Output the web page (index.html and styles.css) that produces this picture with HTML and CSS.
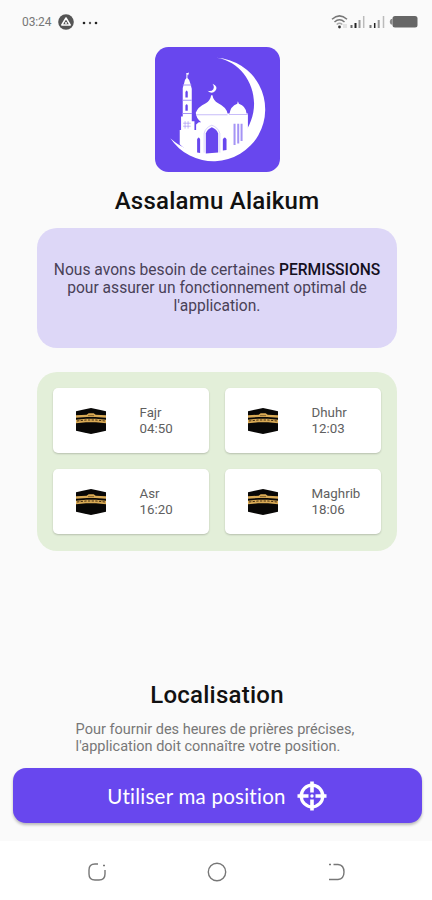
FILE: index.html
```html
<!DOCTYPE html>
<html lang="fr">
<head>
<meta charset="utf-8">
<meta name="viewport" content="width=device-width">
<title>Assalamu Alaikum</title>
<link rel="stylesheet" href="styles.css">
</head>
<body>
<svg class="defs" width="0" height="0" aria-hidden="true">
  <symbol id="kaaba" viewBox="0 0 90 78">
    <path d="M0 10 20 5 45 0 70 5 90 10V68L70 73 45 78 20 73 0 68Z" fill="#080706"/>
    <path d="M0 22 32 20 38 16H53L59 20 90 22V29L58 27H33L0 29Z" fill="#d9aa55"/>
    <path d="M0 35 30 32H60L90 35V46L60 43H30L0 46Z" fill="#d9aa55"/>
    <path d="M3 39 30 36H60L87 39" fill="none" stroke="#4b3212" stroke-width="3" stroke-dasharray="7 4"/>
    <path d="M36 23H54" stroke="#80602c" stroke-width="3"/>
  </symbol>
</svg>
<div class="screen">
  <header class="status">
    <span class="clock">03:24</span>
    <svg class="app-dot" viewBox="0 0 16 16"><circle cx="8" cy="8" r="7.800" fill="#555"/><path d="M8 4 12.200 11H3.800Z" fill="none" stroke="#fff" stroke-width="1.500" stroke-linejoin="round"/><circle cx="8" cy="9" r="1" fill="#fff"/></svg>
    <svg class="more" viewBox="0 0 16 4"><circle cx="2" cy="2" r="1.300" fill="#222"/><circle cx="8" cy="2" r="1.200" fill="#555"/><circle cx="14" cy="2" r="1.300" fill="#222"/></svg>
    <svg class="signals" viewBox="0 0 87 16">
      <g fill="none" stroke="#777" stroke-width="1.500"><path d="M1 5.200Q8.500-1.500 16 5.200"/><path d="M3.500 8Q8.500 3.500 13.500 8"/><path d="M5.700 10.500Q8.500 8 11.300 10.500" stroke="#aaa"/></g>
      <circle cx="8.500" cy="13" r="1.400" fill="#333"/><path d="M13 10v4M15 10v4" stroke="#ccc"/>
      <path d="M20.500 11v3" stroke="#666" stroke-width="2"/><path d="M24.500 9v5" stroke="#222" stroke-width="2"/><path d="M28.500 6v8" stroke="#999" stroke-width="2"/><path d="M32.700 2v12" stroke="#bbb" stroke-width="1.500"/>
      <path d="M39.500 11v3" stroke="#777" stroke-width="2"/><path d="M43.700 9v5" stroke="#222" stroke-width="1.500"/><path d="M47.700 6v8" stroke="#999" stroke-width="2"/><path d="M52.500 2v12" stroke="#bbb" stroke-width="1.500"/>
      <rect x="61.500" y="2" width="25" height="11.500" rx="2.500" fill="#666"/><path d="M61.500 5H60Q57.500 7.800 60 10.500H61.500Z" fill="#888"/>
    </svg>
  </header>
  <main>
    <svg class="logo" viewBox="14 14 374 374">
      <rect x="14" y="14" width="374" height="374" rx="40" fill="#6847ee"/>
      <g fill="#fff">
        <path d="M198 46A155 155 0 1 1 60 287C75 300 100 322 150 329C230 340 293 285 308 210C322 135 275 58 198 46Z"/>
        <path d="M88 262H92V222H97V137L101 123Q102 112 108 107V92H111V107Q119 113 120 124L124 139V236H132V262H137V246L145 239H152Q137 228 136 211Q142 193 166 182Q180 173 182 158H186Q188 173 203 182Q228 194 231 213H237Q240 192 260 184L262 176 265 184Q286 191 288 213H292V270L280 305Q240 346 188 346Q127 344 88 305Z"/>
        <path d="M186 124Q205 132 194 146Q184 156 171 145Q183 148 188 141Q193 133 186 124Z"/>
        <path d="M108 93 116 90 113 99Z"/>
      </g>
      <g fill="#6847ee">
        <path d="M105 149Q109 140 112 149V165H105ZM105 189Q109 181 112 189V205H105Z"/>
        <path d="M166 333V273Q170 260 184 254Q199 260 203 273V330Z"/>
        <path d="M140 330V290Q145 279 149 290V331ZM217 324V290Q223 279 228 290V322Z"/>
      </g>
      <path d="M97 173H124M96 213H125M97 128H123" stroke="#a594f5" stroke-width="3"/>
      <path d="M98 242H121M98 251H121M104 236V258M113 236V258" stroke="#a594f5" stroke-width="2"/>
      <path d="M137 217H231M235 216H292" stroke="#c8bdf9" stroke-width="3"/>
      <path d="M252 244V307M263 244V303M273 244V295" stroke="#a594f5" stroke-width="6"/>
      <path d="M161 330V272Q166 254 184 248Q202 254 208 272V330" fill="none" stroke="#c8bdf9" stroke-width="2"/>
    </svg>
    <h1>Assalamu Alaikum</h1>
    <section class="notice">
      <p>Nous avons besoin de certaines <b>PERMISSIONS</b><br>pour assurer un fonctionnement optimal de<br>l'application.</p>
    </section>
    <section class="prayers">
      <article class="card"><svg class="kaaba"><use href="#kaaba"/></svg><p>Fajr<br>04:50</p></article>
      <article class="card"><svg class="kaaba"><use href="#kaaba"/></svg><p>Dhuhr<br>12:03</p></article>
      <article class="card"><svg class="kaaba"><use href="#kaaba"/></svg><p>Asr<br>16:20</p></article>
      <article class="card"><svg class="kaaba"><use href="#kaaba"/></svg><p>Maghrib<br>18:06</p></article>
    </section>
    <section class="location">
      <h2>Localisation</h2>
      <p>Pour fournir des heures de prières précises,<br>l'application doit connaître votre position.</p>
    </section>
    <button class="action"><span>Utiliser ma position</span>
      <svg viewBox="0 0 30 30"><circle cx="15" cy="15" r="10.800" fill="none" stroke="#fff" stroke-width="3.300"/><path d="M15 .5V11.500M15 18.500V29.500M.500 15H11.500M18.500 15H29.500" stroke="#fff" stroke-width="3.600"/><circle cx="15" cy="15" r="1.700" fill="#fff"/></svg>
    </button>
  </main>
  <nav>
    <svg viewBox="0 0 20 20"><path d="M11 2H8Q2 2 2 8V12Q2 18 8 18H12Q18 18 18 12V8M16 3.500h2"/></svg>
    <svg viewBox="0 0 20 20"><circle cx="10" cy="10" r="8.700"/></svg>
    <svg viewBox="0 0 20 20"><path d="M2 2.500H4M6.500 2.500H11Q17 3 17 10T11 17.500H2"/></svg>
  </nav>
</div>
</body>
</html>
```
FILE: styles.css
```css
* { box-sizing: border-box; }
body { margin: 0; background: #fafafa; font-family: Roboto, sans-serif; color: #111; }
h1, h2, p { margin: 0; }
.defs { display: block; height: 0; }
.screen { width: 432px; height: 900px; display: flex; flex-direction: column; overflow: hidden; }
.status { height: 46.500px; padding: 14px 14px 0 22px; display: flex; align-items: flex-start; flex: none; }
.clock { width: 36px; font-size: 12px; line-height: 17px; color: #777; letter-spacing: -.1px; white-space: nowrap; }
.app-dot { width: 16px; height: 16px; }
.more { width: 16px; height: 4px; margin: 6.500px 0 0 8px; }
.signals { width: 87px; height: 16px; margin-left: auto; }
main { flex: 1; display: flex; flex-direction: column; align-items: center; padding-left: 2px; }
.logo { width: 125px; height: 125px; flex: none; }
h1, h2 { font-size: 24px; line-height: 30px; font-weight: 500; letter-spacing: .25px; white-space: nowrap; }
h1 { margin-top: 14px; }
.notice { width: 360px; height: 120px; margin-top: 12px; padding-top: 33px; background: #ddd7f7; border-radius: 20px; display: flex; justify-content: center; text-align: center; font-size: 15.600px; line-height: 18px; color: #494157; white-space: nowrap; }
.notice b { color: #15101f; font-weight: 500; }
.prayers { width: 360px; height: 179px; margin-top: 24.500px; padding: 16px; display: grid; grid-template-columns: 156px 156px; grid-template-rows: 65px 65px; gap: 16px; background: #e3efd9; border-radius: 20px; }
.card { display: flex; align-items: center; padding-left: 23px; background: #fff; border-radius: 5px; box-shadow: 0 1px 2px #0003; }
.kaaba { width: 30px; height: 26px; margin-right: 33.500px; }
.card p { font-size: 13.300px; line-height: 16px; color: #606060; white-space: nowrap; padding-top: 1px; }
.location { margin-top: 129px; }
.location h2 { text-align: center; }
.location p { margin-top: 12px; font-size: 14.500px; line-height: 16.500px; color: #777; white-space: nowrap; padding-right: 4px; }
.action { width: 409px; height: 55px; margin-top: 13px; flex: none; display: flex; align-items: center; justify-content: center; gap: 11px; padding: 0; border: 0; border-radius: 13px; background: #6847ee; color: #fff; box-shadow: 0 2px 3px #0004; font: 20.500px Lato, sans-serif; letter-spacing: .25px; white-space: nowrap; }
.action svg { width: 30px; height: 30px; }
nav { height: 59px; flex: none; background: #fff; display: flex; justify-content: center; gap: 100px; padding: 21px 0 0 1px; }
nav svg { width: 20px; height: 20px; fill: none; stroke: #777; stroke-width: 1.400; }
```
